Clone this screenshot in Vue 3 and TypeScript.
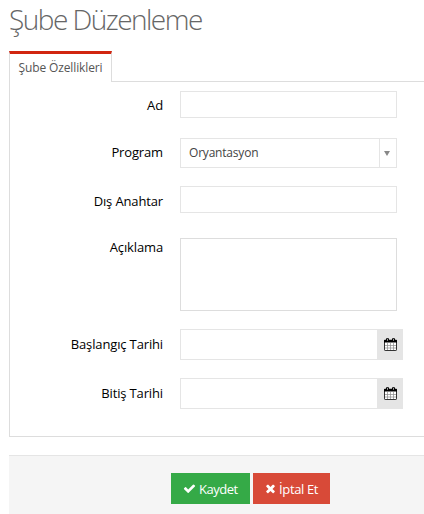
<script setup lang="ts">
import { ref } from 'vue'

type Kind = 'text' | 'select' | 'area' | 'date'
interface Field {
  id: string
  label: string
  kind: Kind
}

const fields: Field[] = [
  { id: 'ad', label: 'Ad', kind: 'text' },
  { id: 'program', label: 'Program', kind: 'select' },
  { id: 'anahtar', label: 'Dış Anahtar', kind: 'text' },
  { id: 'aciklama', label: 'Açıklama', kind: 'area' },
  { id: 'baslangic', label: 'Başlangıç Tarihi', kind: 'date' },
  { id: 'bitis', label: 'Bitiş Tarihi', kind: 'date' },
]

const values = ref<Record<string, string>>({
  ad: '',
  program: 'Oryantasyon',
  anahtar: '',
  aciklama: '',
  baslangic: '',
  bitis: '',
})
</script>

<template>
  <main class="page">
    <h1 class="title">Şube Düzenleme</h1>
    <nav class="tabs">
      <span class="tab">Şube Özellikleri</span>
      <span class="tab-rest"></span>
    </nav>
    <form class="panel" @submit.prevent>
      <div v-for="f in fields" :key="f.id" class="row" :class="'row-' + f.kind">
        <label class="label" :for="f.id">{{ f.label }}</label>
        <input v-if="f.kind === 'text'" :id="f.id" v-model="values[f.id]" class="box" type="text" />
        <div v-else-if="f.kind === 'select'" :id="f.id" class="box select">
          <span class="chosen">{{ values[f.id] }}</span>
          <span class="arrow"><i class="caret"></i></span>
        </div>
        <textarea v-else-if="f.kind === 'area'" :id="f.id" v-model="values[f.id]" class="box"></textarea>
        <div v-else class="date">
          <input :id="f.id" v-model="values[f.id]" class="box" type="text" />
          <span class="addon">
            <svg class="calendar" viewBox="0 0 13 13">
              <rect class="sheet" x="0.5" y="2.5" width="12" height="10" rx="0.6" />
              <path class="grid" d="M3.5 5v7M6.5 5v7M9.5 5v7M1 7.5h11M1 10h11" />
              <path class="head" d="M0 4.6V2.4Q0 1.7 .8 1.7H2V1.2Q2 0 3.5 0T5 1.2v.5h3v-.5Q8 0 9.5 0T11 1.2v.5h1.2q.8 0 .8.7v2.2z" />
              <path class="ring" d="M3.5 .8v2M9.5 .8v2" />
            </svg>
          </span>
        </div>
      </div>
    </form>
    <footer class="actions">
      <button class="btn save" type="button">
        <svg class="icon check" viewBox="0 0 1792 1792">
          <path d="M1671 566q0 40-28 68l-724 724-136 136q-28 28-68 28t-68-28l-136-136-362-362q-28-28-28-68t28-68l136-136q28-28 68-28t68 28l294 295 656-657q28-28 68-28t68 28l136 136q28 28 28 68z" />
        </svg>
        <span>Kaydet</span>
      </button>
      <button class="btn cancel" type="button">
        <svg class="icon times" viewBox="192 0 1408 1792">
          <path d="M1490 1322q0 40-28 68l-136 136q-28 28-68 28t-68-28l-294-294-294 294q-28 28-68 28t-68-28l-136-136q-28-28-28-68t28-68l294-294-294-294q-28-28-28-68t28-68l136-136q28-28 68-28t68 28l294 294 294-294q28-28 68-28t68 28l136 136q28 28 28 68t-28 68l-294 294 294 294q28 28 28 68z" />
        </svg>
        <span>İptal Et</span>
      </button>
    </footer>
  </main>
</template>

<style>
body {
  margin: 0;
  background: #fff;
  overflow: hidden;
}
</style>

<style scoped>
* {
  box-sizing: border-box;
}
.page {
  display: flex;
  flex-direction: column;
  height: 514px;
  padding-left: 9px;
  font-family: 'Open Sans', sans-serif;
  font-size: 13px;
  color: #000;
  overflow: hidden;
}
.title {
  flex: none;
  height: 51px;
  margin: 0;
  font-size: 28px;
  line-height: 39px;
  font-weight: 300;
  letter-spacing: -1.52px;
  color: #666;
  white-space: nowrap;
}
.tabs {
  display: flex;
  flex: none;
  height: 31px;
}
.tab {
  width: 103px;
  border: 1px solid #ddd;
  border-top: 3px solid #d12610;
  border-bottom: 0;
  font-size: 12px;
  line-height: 28px;
  letter-spacing: -0.12px;
  text-align: center;
  color: #555;
  white-space: nowrap;
}
.tab-rest {
  flex: 1;
  border-bottom: 1px solid #ddd;
}
.panel {
  display: flex;
  flex-direction: column;
  flex: none;
  height: 355px;
  padding-top: 9px;
  border-left: 1px solid #ddd;
  border-bottom: 1px solid #ddd;
}
.row {
  display: flex;
  flex: none;
  align-items: flex-start;
  height: 47px;
}
.row-select {
  height: 48px;
}
.row-text ~ .row-text {
  height: 52px;
}
.row-area {
  height: 91px;
}
.row-date {
  height: 49px;
}
.label {
  width: 153px;
  margin-right: 17px;
  line-height: 18px;
  padding-top: 5px;
  letter-spacing: -0.14px;
  text-align: right;
  white-space: nowrap;
}
.row-text ~ .row-text .label,
.row-date .label {
  padding-top: 6px;
}
.row-area .label {
  padding-top: 0;
}
.box {
  display: block;
  width: 217px;
  height: 27px;
  margin: 0;
  padding: 4px 8px;
  border: 1px solid #e5e5e5;
  border-radius: 0;
  background: #fff;
  font: inherit;
  outline: none;
  resize: none;
}
textarea.box {
  height: 73px;
  border-color: #ddd;
}
.select {
  display: flex;
  height: 30px;
  padding: 0;
  font-size: 12px;
  letter-spacing: -0.2px;
  color: #444;
}
.chosen {
  flex: 1;
  padding-left: 8px;
  line-height: 28px;
}
.arrow {
  display: flex;
  align-items: center;
  width: 17px;
  padding-left: 4px;
  border-left: 1px solid #e5e5e5;
}
.caret {
  border: 3px solid transparent;
  border-top: 5px solid #888;
  border-bottom: 0;
}
.date {
  display: flex;
}
.date .box {
  width: 197px;
  height: 31px;
  border-right: 0;
}
.addon {
  display: flex;
  justify-content: center;
  width: 26px;
  height: 31px;
  padding-top: 9px;
  background: #e5e5e5;
}
.calendar {
  width: 13px;
  height: 13px;
}
.sheet {
  fill: #fff;
  stroke: #333;
}
.grid {
  fill: none;
  stroke: #888;
  stroke-width: 0.7;
}
.head {
  fill: #000;
}
.ring {
  fill: none;
  stroke: #ccc;
  stroke-width: 0.8;
}
.actions {
  display: flex;
  align-items: flex-start;
  flex: 1;
  gap: 3px;
  margin-top: 18px;
  padding: 17px 0 0 162px;
  border-top: 1px solid #e5e5e5;
  background: #f5f5f5;
}
.btn {
  display: flex;
  align-items: center;
  height: 31px;
  margin: 0;
  padding: 0 0 0 12px;
  border: 0;
  font: inherit;
  letter-spacing: -0.5px;
  color: #fff;
  white-space: nowrap;
}
.save {
  width: 79px;
  background: #35aa47;
}
.cancel {
  width: 77px;
  letter-spacing: -0.35px;
  background: #d84a38;
}
.icon {
  flex: none;
  height: 13px;
  fill: #fff;
}
.check {
  width: 13px;
  margin-right: 3px;
}
.times {
  width: 11px;
  margin-right: 3px;
}
</style>
